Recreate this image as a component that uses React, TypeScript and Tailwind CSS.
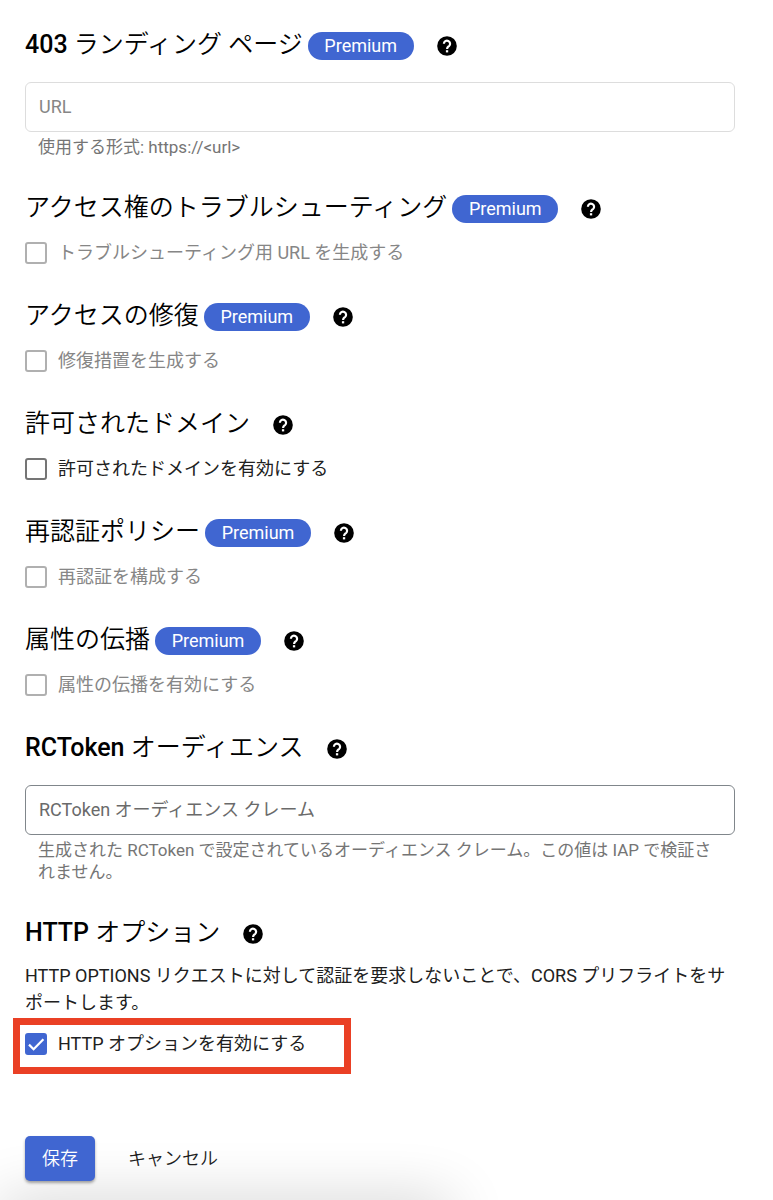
import type { ReactNode } from "react";

interface OptionSectionProps {
  id: string;
  title: string;
  label: string;
  premium?: boolean;
  disabled?: boolean;
}

interface TextSectionProps {
  id: string;
  prefix?: string;
  title: string;
  placeholder: string;
  hint: string;
  premium?: boolean;
  disabled?: boolean;
}

function HelpButton({ title }: { title: string }) {
  return (
    <button type="button" aria-label={`${title} のヘルプ`} className="ml-[23px] shrink-0">
      <svg viewBox="0 0 20 20" className="block size-5" fill="none">
        <circle cx="10" cy="10" r="9.8" fill="black" />
        <path d="M6.9 7.7a3.1 3.1 0 1 1 5.2 2.3C10.9 11 10.1 11.3 10.1 12.9" stroke="white" strokeWidth="2.2" />
        <rect x="8.9" y="14.2" width="2.3" height="2.2" fill="white" />
      </svg>
    </button>
  );
}

function SectionHeading({ prefix, title, premium }: { prefix?: string; title: string; premium?: boolean }) {
  return (
    <div className="flex h-7 items-center">
      <h2 className="pb-0.5 text-[25px] leading-7 font-[350] whitespace-nowrap">
        {prefix && <span className="font-medium">{prefix} </span>}
        {title}
      </h2>
      {premium && (
        <span className="ml-[5px] flex h-7 w-[106px] items-center justify-center rounded-full bg-[#4066d1] text-lg text-white">
          Premium
        </span>
      )}
      <HelpButton title={title} />
    </div>
  );
}

function Checkbox({ id, label, disabled, checked }: { id: string; label: ReactNode; disabled?: boolean; checked?: boolean }) {
  return (
    <div className="flex h-[22px] items-center gap-[11px]">
      <span className="relative size-[22px] shrink-0">
        <input
          id={id}
          type="checkbox"
          defaultChecked={checked}
          disabled={disabled}
          className="peer block size-[22px] appearance-none rounded-[3px] border-2 border-[#757575] checked:border-[#4066d1] checked:bg-[#4066d1] disabled:border-[#b0b0b0]"
        />
        <svg
          viewBox="0 0 22 22"
          className="pointer-events-none absolute inset-0 hidden text-white peer-checked:block"
          fill="none"
          stroke="currentColor"
          strokeWidth="2.2"
        >
          <path d="M4 11.6l4.6 4.6L18.4 6.2" />
        </svg>
      </span>
      <label htmlFor={id} className={`text-lg leading-6 ${disabled ? "text-[#868686]" : "text-[#202020]"}`}>
        {label}
      </label>
    </div>
  );
}

function OptionSection({ id, title, label, premium, disabled }: OptionSectionProps) {
  return (
    <section className="mb-[39px]">
      <SectionHeading title={title} premium={premium} />
      <div className="mt-[19px]">
        <Checkbox id={id} label={label} disabled={disabled} />
      </div>
    </section>
  );
}

function TextSection({ id, prefix, title, placeholder, hint, premium, disabled }: TextSectionProps) {
  return (
    <section className="mb-[37px]">
      <SectionHeading prefix={prefix} title={title} premium={premium} />
      <input
        id={id}
        type="text"
        aria-label={placeholder}
        aria-describedby={`${id}-hint`}
        placeholder={placeholder}
        disabled={disabled}
        className="mt-[22px] block h-[50px] w-full rounded-md border border-[#80868b] px-[13px] pb-0.5 text-lg placeholder:text-[#6a6a6a] disabled:border-[#dddddd] disabled:placeholder:text-[#868686]"
      />
      <p id={`${id}-hint`} className="mt-1 px-[13px] text-[17px] leading-[22px] text-[#757575]">
        {hint}
      </p>
    </section>
  );
}

export default function App() {
  return (
    <main
      lang="ja"
      className="relative min-h-screen overflow-hidden bg-white pt-8 pr-[38px] pb-5 pl-[25px] font-[Roboto,'Noto_Sans_CJK_JP',sans-serif] text-black"
    >
      {/* Shadow of the panel below the form */}
      <div className="pointer-events-none absolute top-full left-0 h-10 w-[450px] shadow-[0_0_60px_rgba(0,0,0,0.2)]" />

      <form className="relative" onSubmit={(e) => e.preventDefault()}>
        <TextSection
          id="landing-url"
          prefix="403"
          title="ランディング ページ"
          placeholder="URL"
          hint="使用する形式: https://<url>"
          premium
          disabled
        />
        <OptionSection
          id="troubleshoot"
          title="アクセス権のトラブルシューティング"
          label="トラブルシューティング用 URL を生成する"
          premium
          disabled
        />
        <OptionSection id="remediation" title="アクセスの修復" label="修復措置を生成する" premium disabled />
        <OptionSection id="domains" title="許可されたドメイン" label="許可されたドメインを有効にする" />
        <OptionSection id="reauth" title="再認証ポリシー" label="再認証を構成する" premium disabled />
        <OptionSection id="attributes" title="属性の伝播" label="属性の伝播を有効にする" premium disabled />
        <TextSection
          id="rctoken"
          prefix="RCToken"
          title="オーディエンス"
          placeholder="RCToken オーディエンス クレーム"
          hint="生成された RCToken で設定されているオーディエンス クレーム。この値は IAP で検証されません。"
        />

        <section>
          <SectionHeading prefix="HTTP" title="オプション" />
          <p className="mt-3.5 text-lg leading-[27px] text-[#202020]">
            HTTP OPTIONS リクエストに対して認証を要求しないことで、CORS プリフライトをサポートします。
          </p>
          {/* Highlighted option */}
          <div className="mt-0.5 -ml-3 flex h-14 w-[338px] items-center border-7 border-[#ea4025] pb-1 pl-[5px]">
            <Checkbox id="http-options" label="HTTP オプションを有効にする" checked />
          </div>
        </section>

        {/* Actions */}
        <div className="mt-[62px] flex gap-4">
          <button
            type="submit"
            className="h-[45px] rounded-[5px] bg-[#4066d1] px-[17px] text-lg font-[350] text-white shadow-[0_2px_3px_rgba(0,0,0,0.35)]"
          >
            保存
          </button>
          <button type="button" className="h-[45px] px-[17px] text-lg font-[350] text-[#202020]">
            キャンセル
          </button>
        </div>
      </form>
    </main>
  );
}
